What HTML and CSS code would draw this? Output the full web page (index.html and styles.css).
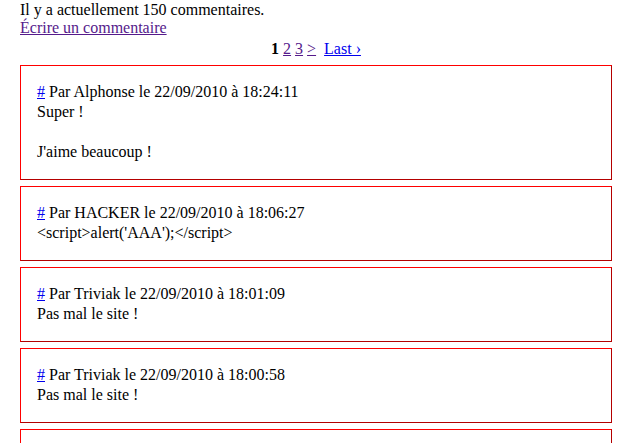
FILE: index.html
```html
<!DOCTYPE html>
<html lang="fr">
<head>
<meta charset="utf-8">
<title>Commentaires</title>
<link rel="stylesheet" href="styles.css">
</head>
<body>
<div class="page">
  <div class="intro">
    Il y a actuellement 150 commentaires.<br>
    <a class="visited" href="#">Écrire un commentaire</a>
  </div>
  <div class="pager">
    <strong>1</strong> <a class="visited" href="#">2</a> <a class="visited" href="#">3</a> <a class="visited" href="#">&gt;</a>&nbsp; <a href="#">Last ›</a>
  </div>
  <div class="comment">
    <a href="#">#</a> Par Alphonse le 22/09/2010 à 18:24:11<br>
    Super !<br><br>
    J'aime beaucoup !
  </div>
  <div class="comment">
    <a href="#">#</a> Par HACKER le 22/09/2010 à 18:06:27<br>
    &lt;script&gt;alert('AAA');&lt;/script&gt;
  </div>
  <div class="comment">
    <a href="#">#</a> Par Triviak le 22/09/2010 à 18:01:09<br>
    Pas mal le site !
  </div>
  <div class="comment">
    <a href="#">#</a> Par Triviak le 22/09/2010 à 18:00:58<br>
    Pas mal le site !
  </div>
  <div class="comment">
    <a href="#">#</a> Par Triviak le 22/09/2010 à 17:59:40<br>
    Pas mal le site !
  </div>
</div>
</body>
</html>
```

FILE: styles.css
```css
html, body {
  margin: 0;
  padding: 0;
  background: #fff;
}

body {
  font-family: "Liberation Serif", "Times New Roman", serif;
  font-size: 16px;
  color: #000;
}

.page {
  width: 592px;
  padding: 1px 0 0 20px;
}

a {
  color: #0000ee;
  text-decoration: underline;
}

a.visited {
  color: #551a8b;
}

.intro {
  line-height: 18px;
}

.pager {
  margin-top: 2px;
  line-height: 20px;
  text-align: center;
}

.comment {
  margin-top: 6px;
  padding: 16px 16px 17px 16px;
  line-height: 20px;
  border-style: solid;
  border-width: 1px;
  border-color: #ff0000 #b40000 #b40000 #ff0000;
}
```
